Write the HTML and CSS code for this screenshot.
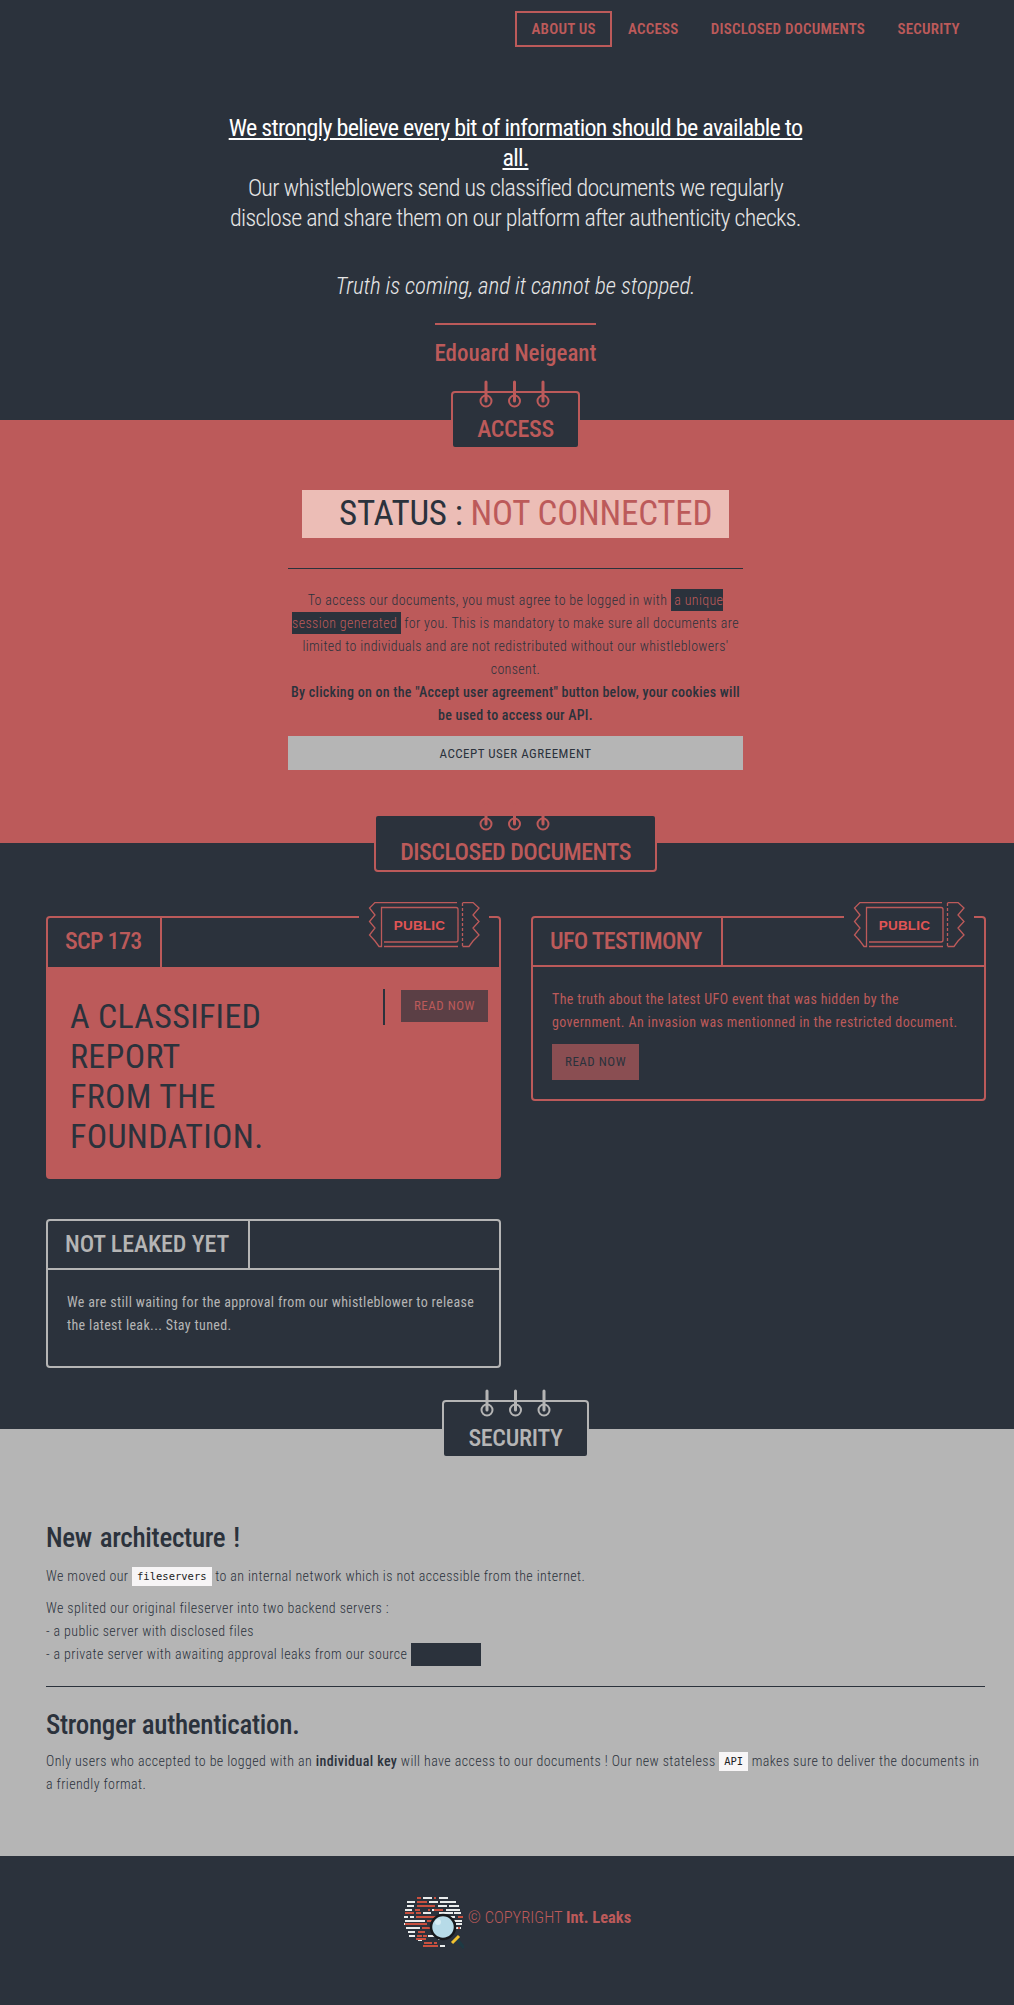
FILE: index.html
```html
<!DOCTYPE html>
<html>
<head>
<meta name="viewport" content="width=device-width, initial-scale=1">
<title>Int. Leaks</title>
<link rel="stylesheet" href="styles.css">
</head>
<body>

<nav class="topnav">
  <a class="active">ABOUT US</a>
  <a>ACCESS</a>
  <a>DISCLOSED DOCUMENTS</a>
  <a>SECURITY</a>
</nav>

<!-- about -->
<section class="hero wrap">
  <p class="hero-text">
    <u>We strongly believe every bit of information should be available to<br>all.</u><br>
    <span class="thin">Our whistleblowers send us classified documents we regularly<br>
    disclose and share them on our platform after authenticity checks.</span>
  </p>
  <p class="quote">Truth is coming, and it cannot be stopped.</p>
  <div class="signature">Edouard Neigeant</div>
</section>

<!-- access -->
<section class="access wrap">
  <div class="tag-row">
    <h2 class="tag tag-red">
      <svg class="spiral" width="96" height="30" viewBox="0 0 96 30"><path d="M0 12H96" stroke="currentColor" stroke-width="2"/><g fill="none" stroke="currentColor"><circle cx="19" cy="21" r="5.500" stroke-width="2"/><circle cx="47.500" cy="21" r="5.500" stroke-width="2"/><circle cx="76" cy="21" r="5.500" stroke-width="2"/><path d="M19 2V21M47.500 2V21M76 2V21" stroke-width="3" stroke-linecap="round"/></g></svg>
      ACCESS
    </h2>
  </div>
  <div class="status"><span class="status-label">STATUS :</span> NOT CONNECTED</div>
  <div class="agreement">
    <p>To access our documents, you must agree to be logged in with <mark>&nbsp;a unique session generated&nbsp;</mark> for you. This is mandatory to make sure all documents are limited to individuals and are not redistributed without our whistleblowers' consent.<br>
    <b>By clicking on on the "Accept user agreement" button below, your cookies will be used to access our API.</b></p>
    <button class="accept">ACCEPT USER AGREEMENT</button>
  </div>
</section>

<!-- documents -->
<section class="documents wrap">
  <div class="tag-row">
    <h2 class="tag tag-red tag-wide">
      <svg class="spiral" width="96" height="30" viewBox="0 0 96 30"><path d="M0 12H96" stroke="#bc5a5a" stroke-width="2"/><g fill="none" stroke="currentColor"><circle cx="19" cy="21" r="5.500" stroke-width="2"/><circle cx="47.500" cy="21" r="5.500" stroke-width="2"/><circle cx="76" cy="21" r="5.500" stroke-width="2"/><path d="M19 2V21M47.500 2V21M76 2V21" stroke-width="3" stroke-linecap="round"/></g></svg>
      DISCLOSED DOCUMENTS
    </h2>
  </div>

  <div class="cards">
    <div class="card card-red">
      <div class="card-head"><h3>SCP 173</h3></div>
      <svg class="ticket" width="130" height="46" viewBox="-10 0 130 46"><rect x="-10" y="0" width="130" height="46" fill="#2b323c"/><path d="M88 .5H6L.5 6 6 13 .5 19.500 6 26 .5 33 6 39 10 44.500H12.500V5.500H87q2 0 2 2V38q0 2-2 2H15M15 44.500H89M93.500 .5H104L110 6 104 13 110 19.500 104 26 110 33 104 39 100 44.500H93.500" fill="none" stroke="#bc5a5a" stroke-width="1.300"/><path d="M93.500 1V44" stroke="#bc5a5a" stroke-width="1.300" stroke-dasharray="3 2"/><text x="50.500" y="28" text-anchor="middle" class="ticket-text">PUBLIC</text></svg>
      <div class="card-body big">
        <div class="big-title">A CLASSIFIED<br>REPORT<br>FROM THE<br>FOUNDATION.</div>
        <div class="big-action"><a class="read read-dim">READ NOW</a></div>
      </div>
    </div>

    <div class="card">
      <div class="card-head"><h3>UFO TESTIMONY</h3></div>
      <svg class="ticket" width="130" height="46" viewBox="-10 0 130 46"><rect x="-10" y="0" width="130" height="46" fill="#2b323c"/><path d="M88 .5H6L.5 6 6 13 .5 19.500 6 26 .5 33 6 39 10 44.500H12.500V5.500H87q2 0 2 2V38q0 2-2 2H15M15 44.500H89M93.500 .5H104L110 6 104 13 110 19.500 104 26 110 33 104 39 100 44.500H93.500" fill="none" stroke="#bc5a5a" stroke-width="1.300"/><path d="M93.500 1V44" stroke="#bc5a5a" stroke-width="1.300" stroke-dasharray="3 2"/><text x="50.500" y="28" text-anchor="middle" class="ticket-text">PUBLIC</text></svg>
      <div class="card-body">
        <p>The truth about the latest UFO event that was hidden by the government. An invasion was mentionned in the restricted document.</p>
        <a class="read">READ NOW</a>
      </div>
    </div>

    <div class="card card-grey">
      <div class="card-head"><h3>NOT LEAKED YET</h3></div>
      <div class="card-body">
        <p>We are still waiting for the approval from our whistleblower to release the latest leak... Stay tuned.</p>
      </div>
    </div>
  </div>
</section>

<!-- security -->
<section class="security wrap">
  <div class="tag-row">
    <h2 class="tag tag-grey">
      <svg class="spiral" width="96" height="30" viewBox="0 0 96 30"><path d="M0 12H96" stroke="currentColor" stroke-width="2"/><g fill="none" stroke="currentColor"><circle cx="19" cy="21" r="5.500" stroke-width="2"/><circle cx="47.500" cy="21" r="5.500" stroke-width="2"/><circle cx="76" cy="21" r="5.500" stroke-width="2"/><path d="M19 2V21M47.500 2V21M76 2V21" stroke-width="3" stroke-linecap="round"/></g></svg>
      SECURITY
    </h2>
  </div>

  <h2 class="sec-title first">New architecture !</h2>
  <p>We moved our <code>fileservers</code> to an internal network which is not accessible from the internet.</p>
  <p class="second">We splited our original fileserver into two backend servers :<br>
  - a public server with disclosed files<br>
  - a private server with awaiting approval leaks from our source <span class="redacted"></span></p>
  <hr>
  <h2 class="sec-title">Stronger authentication.</h2>
  <p>Only users who accepted to be logged with an <b>individual key</b> will have access to our documents ! Our new stateless <code>API</code> makes sure to deliver the documents in a friendly format.</p>
</section>

<footer class="footer wrap">
  <svg class="logo" width="60" height="55" viewBox="0 0 60 55">
    <g fill="#e9ecec">
      <rect x="19" y="2" width="9" height="2"/><rect x="35" y="2" width="9" height="2"/>
      <rect x="3" y="6" width="8" height="2"/><rect x="25" y="6" width="9" height="2"/><rect x="36" y="6" width="16" height="2"/>
      <rect x="3" y="10" width="7" height="2"/><rect x="34" y="10" width="9" height="2"/><rect x="45" y="10" width="10" height="2"/>
      <rect x="1" y="14" width="7" height="2"/><rect x="28" y="14" width="8" height="2"/><rect x="42" y="14" width="14" height="2"/>
      <rect x="19" y="17" width="8" height="2"/><rect x="35" y="17" width="14" height="2"/><rect x="50" y="17" width="7" height="2"/>
      <rect x="0" y="21" width="4" height="2"/><rect x="6" y="21" width="4" height="2"/><rect x="46" y="21" width="5" height="2"/>
      <rect x="1" y="25" width="20" height="2"/><rect x="49" y="25" width="9" height="2"/>
      <rect x="0" y="28" width="8" height="2"/><rect x="52" y="28" width="6" height="2"/>
      <rect x="2" y="32" width="14" height="2"/><rect x="50" y="32" width="7" height="2"/>
      <rect x="4" y="36" width="7" height="2"/>
      <rect x="5" y="40" width="6" height="2"/><rect x="24" y="40" width="8" height="2"/>
      <rect x="14" y="44" width="4" height="2"/><rect x="34" y="43" width="8" height="2"/>
      <rect x="36" y="50" width="5" height="2"/>
    </g>
    <g fill="#c9503f">
      <rect x="13" y="2" width="4" height="2"/><rect x="30" y="2" width="2" height="2"/>
      <rect x="13" y="6" width="10" height="2"/>
      <rect x="13" y="10" width="18" height="2"/>
      <rect x="11" y="14" width="5" height="2"/><rect x="24" y="14" width="2" height="2"/><rect x="30" y="14" width="9" height="2"/>
      <rect x="1" y="17" width="9" height="2"/><rect x="12" y="17" width="5" height="2"/>
      <rect x="12" y="21" width="24" height="2"/><rect x="54" y="21" width="5" height="2"/>
      <rect x="23" y="25" width="5" height="2"/>
      <rect x="1" y="28" width="22" height="2"/>
      <rect x="18" y="32" width="8" height="2"/><rect x="54" y="32" width="2" height="2"/>
      <rect x="14" y="36" width="7" height="2"/>
      <rect x="13" y="40" width="5" height="2"/><rect x="19" y="40" width="4" height="2"/>
      <rect x="12" y="43" width="10" height="2"/>
      <rect x="20" y="47" width="8" height="2"/><rect x="30" y="47" width="3" height="2"/>
      <rect x="19" y="50" width="15" height="2"/>
    </g>
    <circle cx="39" cy="32" r="12" fill="#b7dbe8" stroke="#17191c" stroke-width="2.500"/>
    <circle cx="34" cy="27" r="3" fill="#d5ecf3"/>
    <path d="M52 43L60 53" stroke="#1d3a44" stroke-width="3"/>
    <path d="M48 48L55 41" stroke="#f2c230" stroke-width="3"/>
  </svg>
  <span class="copy">© COPYRIGHT <b>Int. Leaks</b></span>
</footer>

</body>
</html>
```
FILE: styles.css
```css
* {
  box-sizing: border-box;
}

body {
  margin: 0;
  background: #2b323c;
  color: #bc5a5a;
  font-family: "Roboto", "Liberation Sans", sans-serif;
  font-stretch: 75%;
  font-size: 14px;
  line-height: 23px;
}

p {
  margin: 0;
  letter-spacing: .35px;
}

/* content sits a bit right of the window centre */
.wrap {
  padding-left: 46px;
  padding-right: 29px;
}

/* Top menu */
.topnav {
  display: flex;
  justify-content: flex-end;
  padding: 11px 38px 0 0;
}

.topnav a {
  padding: 0 14.200px;
  border: 2px solid transparent;
  font-size: 15px;
  font-weight: 600;
  letter-spacing: .2px;
  line-height: 32px;
}

.topnav a.active {
  border-color: #bc5a5a;
}

/* Hero */
.hero {
  height: 373px;
  padding-top: 66px;
  text-align: center;
  color: #fff;
}

.hero-text {
  font-size: 24px;
  line-height: 30px;
  letter-spacing: -.7px;
}

.hero-text .thin {
  font-weight: 300;
  color: #e6e6e6;
}

.quote {
  margin-top: 39px;
  font-size: 23px;
  font-weight: 300;
  font-style: italic;
  line-height: 30px;
  letter-spacing: -.1px;
  color: #e6e6e6;
}

.signature {
  display: flex;
  justify-content: center;
  width: 161px;
  margin: 21px auto 0;
  padding-top: 11px;
  border-top: 2px solid #bc5a5a;
  font-size: 23px;
  font-weight: 500;
  line-height: 36px;
  color: #bc5a5a;
  white-space: nowrap;
}

/* Section tags with the notebook rings */
.tag-row {
  display: flex;
  justify-content: center;
  height: 0;
}

.tag {
  position: relative;
  height: 58px;
  margin: -29px 0 0;
  padding: 20px 24px 0;
  background: #2b323c;
  border: 2px solid currentColor;
  border-radius: 4px;
  font-size: 24px;
  font-weight: 500;
  letter-spacing: -.3px;
  line-height: 32px;
  white-space: nowrap;
}

.tag-wide {
  letter-spacing: -.5px;
}

.tag-red {
  color: #bc5a5a;
}

.tag-grey {
  color: #b5b5b5;
}

.spiral {
  position: absolute;
  left: 50%;
  top: -13px;
  margin-left: -48px;
}

/* Access */
.access {
  height: 423px;
  background: #bc5a5a;
  color: #2b323c;
}

.status {
  width: 427px;
  height: 48px;
  margin: 70px auto 0;
  padding-left: 37px;
  background: #ecbdb6;
  color: #bc5a5a;
  font-size: 35px;
  line-height: 48px;
  letter-spacing: -.2px;
  white-space: nowrap;
}

.status-label {
  color: #2b323c;
}

.agreement {
  width: 455px;
  margin: 30px auto 0;
  padding-top: 20px;
  border-top: 1px solid #2b323c;
  text-align: center;
}

.agreement p {
  font-weight: 300;
}

.agreement b {
  font-weight: 500;
  letter-spacing: .25px;
}

mark {
  background: #2b323c;
  color: #bc5a5a;
  padding: 3px 0;
}

.accept {
  display: block;
  width: 100%;
  height: 34px;
  margin-top: 9px;
  border: 0;
  background: #b5b5b5;
  color: #2b323c;
  font-family: inherit;
  font-stretch: inherit;
  font-size: 13px;
  letter-spacing: .5px;
}

/* Documents */
.documents {
  height: 586px;
}

.cards {
  display: grid;
  grid-template-columns: 455px 455px;
  column-gap: 30px;
  row-gap: 40px;
  align-items: start;
  padding-top: 73px;
}

.card {
  position: relative;
  border: 2px solid #bc5a5a;
  border-radius: 4px;
}

.card-head {
  display: flex;
  height: 49px;
  border-bottom: 2px solid #bc5a5a;
}

.card-head h3 {
  margin: 0;
  padding: 0 19px 0 17px;
  border-right: 2px solid #bc5a5a;
  font-size: 24px;
  font-weight: 500;
  letter-spacing: -.7px;
  line-height: 46px;
}

.card-body {
  padding: 21px 19px 19px;
}

.ticket {
  position: absolute;
  right: 10px;
  top: -16px;
}

.ticket-text {
  font-family: "Liberation Sans", sans-serif;
  font-size: 13.500px;
  font-weight: 700;
  fill: #e05555;
  letter-spacing: .2px;
}

.read {
  display: inline-block;
  margin-top: 10px;
  padding: 0 13px;
  height: 36px;
  background: #8a4e52;
  color: #2b323c;
  font-size: 13px;
  letter-spacing: .5px;
  line-height: 36px;
}

/* filled card */
.card-red .card-head {
  border-bottom: 0;
}

.big {
  display: flex;
  justify-content: space-between;
  height: 210px;
  background: #bc5a5a;
  padding: 20px 11px 0 22px;
}

.big-title {
  margin-top: 9px;
  color: #2b323c;
  font-size: 34px;
  line-height: 40px;
  letter-spacing: .3px;
}

.big-action {
  height: 36px;
  margin-top: 2px;
  padding-left: 16px;
  border-left: 2px solid #2b323c;
}

.read-dim {
  margin-top: 1px;
  height: 32px;
  line-height: 32px;
  background: #5b3f45;
  color: #bc5a5a;
}

/* grey card */
.card-grey,
.card-grey .card-head,
.card-grey h3 {
  border-color: #b5b5b5;
  color: #b5b5b5;
}

.card-grey {
  height: 149px;
}

.card-grey h3 {
  letter-spacing: -.1px;
}

/* Security */
.security {
  height: 427px;
  background: #b5b5b5;
  color: #2b323c;
  font-weight: 300;
}

.security p {
  letter-spacing: .4px;
}

.sec-title {
  margin: 0 0 7px;
  font-size: 27px;
  font-weight: 500;
  line-height: 36px;
  letter-spacing: -.3px;
}

.sec-title.first {
  margin-bottom: 9px;
  padding-top: 91px;
  word-spacing: 2px;
}

.second {
  margin-top: 9px;
}

.security b {
  font-weight: 500;
}

code {
  display: inline-block;
  padding: 0 5px;
  background: #f7f5f6;
  color: #222;
  font-family: "DejaVu Sans Mono", monospace;
  font-stretch: normal;
  font-size: 10.500px;
  letter-spacing: 0;
  line-height: 19px;
  vertical-align: 1px;
}

.redacted {
  display: inline-block;
  width: 70px;
  height: 23px;
  background: #2b323c;
  vertical-align: top;
}

hr {
  margin: 20px 0 20px;
  border: 0;
  border-top: 1px solid #2b323c;
}

/* Footer */
.footer {
  display: flex;
  justify-content: center;
  align-items: flex-start;
  gap: 4px;
  height: 149px;
  padding-top: 39px;
  padding-left: 50px;
}

.copy {
  margin-top: 11px;
  font-size: 16.500px;
  font-weight: 300;
}

.copy b {
  font-weight: 700;
}
```
